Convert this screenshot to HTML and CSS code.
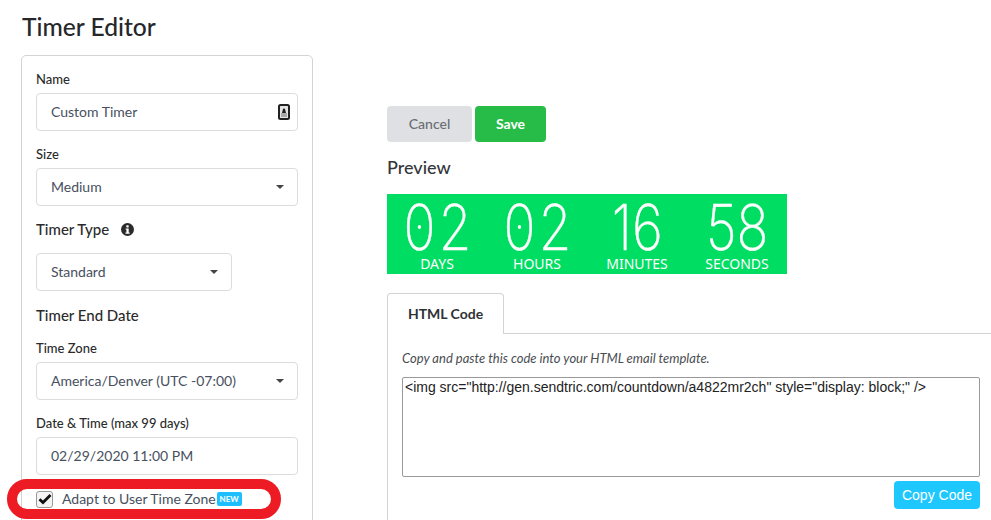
FILE: index.html
```html
<!DOCTYPE html>
<html lang="en">
<head>
<meta charset="utf-8">
<title>Timer Editor</title>
<link rel="stylesheet" href="styles.css">
</head>
<body>
<div class="page">
  <h1 class="title">Timer Editor</h1>
  <div class="columns">
    <section class="card">
      <div class="label">Name</div>
      <div class="control field-gap">
        <span>Custom Timer</span>
        <svg class="contact-icon" width="12" height="16" viewBox="0 0 12 16"><rect x="1" y="1" width="10" height="14" rx="1.5" fill="#e4e4e4" stroke="#222" stroke-width="2"/><rect x="3" y="9" width="6" height="4" fill="#aaa"/><path d="M6 4.5a1.2 1.2 0 0 1 1.2 1.2L8 9H4l.8-3.3A1.2 1.2 0 0 1 6 4.5z" fill="#222"/></svg>
      </div>
      <div class="label">Size</div>
      <div class="control field-gap"><span>Medium</span><i class="caret"></i></div>
      <div class="heading type-heading">Timer Type
        <svg class="info-icon" width="13" height="13" viewBox="0 0 13 13"><circle cx="6.5" cy="6.5" r="6.5" fill="#2b2b2b"/><rect x="5.3" y="2.2" width="2.4" height="2.2" rx=".6" fill="#fff"/><path d="M4.6 5.4h3.1v4.2h.9v1.2H4.5V9.6h.9V6.6h-.8z" fill="#fff"/></svg>
      </div>
      <div class="control control-short"><span>Standard</span><i class="caret"></i></div>
      <div class="heading end-heading">Timer End Date</div>
      <div class="label">Time Zone</div>
      <div class="control field-gap"><span>America/Denver (UTC -07:00)</span><i class="caret"></i></div>
      <div class="label">Date &amp; Time (max 99 days)</div>
      <div class="control"><span>02/29/2020 11:00 PM</span></div>
      <div class="check-row">
        <span class="checkbox"><svg width="14" height="12" viewBox="0 0 14 12"><path d="M1.5 6.2 5 9.6 12.5 2" fill="none" stroke="#111" stroke-width="2.8"/></svg></span>
        <span class="check-text">Adapt to User Time Zone</span>
        <span class="badge">NEW</span>
      </div>
    </section>
    <section class="main">
      <div class="actions">
        <button class="btn btn-cancel">Cancel</button>
        <button class="btn btn-save">Save</button>
      </div>
      <h2 class="preview-title">Preview</h2>
      <div class="timer">
        <div class="unit"><div class="digits"><span class="zero">0</span>2</div><div class="unit-label">DAYS</div></div>
        <div class="unit"><div class="digits"><span class="zero">0</span>2</div><div class="unit-label">HOURS</div></div>
        <div class="unit"><div class="digits">16</div><div class="unit-label">MINUTES</div></div>
        <div class="unit"><div class="digits">58</div><div class="unit-label">SECONDS</div></div>
      </div>
      <div class="tabs"><div class="tab">HTML Code</div></div>
      <div class="tab-body">
        <p class="help">Copy and paste this code into your HTML email template.</p>
        <div class="code">&lt;img src="http://gen.sendtric.com/countdown/a4822mr2ch" style="display: block;" /&gt;</div>
        <div class="copy-row"><button class="btn-copy">Copy Code</button></div>
      </div>
    </section>
  </div>
  <div class="highlight"></div>
</div>
</body>
</html>
```

FILE: styles.css
```css
* { box-sizing: border-box; }
html, body { margin: 0; height: 520px; overflow: hidden; background: #fff; }
body { font-family: "Lato", sans-serif; color: #2b2b2b; }
.page { position: relative; width: 991px; height: 520px; overflow: hidden; padding: 12px 0 0 21px; }
.title { margin: 0 0 12px 1px; font-size: 24.6px; line-height: 30px; font-weight: 500; color: #25272b; height: 31px; }
.columns { display: flex; align-items: flex-start; }
.card { width: 292px; height: 480px; flex: none; border: 1px solid #d3d3d3; border-radius: 5px; padding: 15px 14px 0; }
.label { font-size: 13px; line-height: 16px; font-weight: 500; margin-bottom: 6px; color: #2b2b2b; }
.heading { font-size: 15px; line-height: 18px; font-weight: 500; color: #2b2b2b; }
.control { display: flex; align-items: center; justify-content: space-between; height: 38px; border: 1px solid #dcdcdc; border-radius: 4px; padding: 0 14px 2px 14px; font-size: 14px; color: #47505e; }
.field-gap { margin-bottom: 15px; }
.control-short { width: 196px; }
.contact-icon { margin: 2px -7px 0 0; }
.caret { width: 0; height: 0; border-left: 4px solid transparent; border-right: 4px solid transparent; border-top: 4px solid #444; margin: 2px -1px 0 0; }
.type-heading { display: flex; align-items: center; gap: 12px; margin: -1px 0 15px; }
.info-icon { margin-top: 0; }
.end-heading { margin: 15px 0 16px; }
.check-row { display: flex; align-items: center; margin-top: 14px; height: 20px; }
.checkbox { display: flex; align-items: center; justify-content: center; width: 17px; height: 17px; border: 1px solid #999; border-radius: 3px; background: #f4f4f4; }
.check-text { margin: 0 0 2px 9px; font-size: 14px; color: #47505e; }
.badge { margin-left: 1px; width: 25px; height: 14px; border-radius: 2px; background: #1dbfff; color: #fff; font-size: 8px; font-weight: 700; line-height: 14px; text-align: center; }
.main { margin-left: 74px; flex: 1; min-width: 0; padding-top: 51px; margin-right: -1px; }
.actions { display: flex; gap: 3px; }
.btn { height: 36px; border: 0; border-radius: 4px; font-family: "Lato", sans-serif; font-size: 14px; padding: 0 0 2px; }
.btn-cancel { width: 85px; background: #dfe0e3; color: #6a6d72; font-weight: 500; }
.btn-save { width: 71px; background: #27bc48; color: #fff; font-weight: 700; }
.preview-title { margin: 14px 0 16px; font-size: 18px; line-height: 22px; font-weight: 500; color: #33363a; }
.timer { display: grid; grid-template-columns: repeat(4, 100px); width: 400px; height: 80px; background: #00dd63; color: #fff; text-align: center; }
.unit { display: flex; flex-direction: column; align-items: center; }
.digits { position: relative; display: flex; justify-content: center; font-family: "Inter", sans-serif; font-weight: 200; font-size: 63px; line-height: 58px; height: 58px; margin-top: 4px; transform: scaleX(.84); -webkit-text-stroke: .4px #fff; }
.zero { position: relative; margin-right: 4px; }
.zero::after { content: ""; position: absolute; left: 50%; top: 27px; width: 4px; height: 4px; margin-left: -2px; border-radius: 50%; background: #fff; }
.unit-label { font-family: "Noto Sans", sans-serif; font-size: 14px; line-height: 16px; margin-top: 0; }
.tabs { margin-top: 19px; height: 41px; border-bottom: 1px solid #d3d3d3; display: flex; }
.tab { width: 117px; height: 41px; border: 1px solid #d3d3d3; border-bottom: 0; border-radius: 4px 4px 0 0; background: #fff; font-size: 14px; font-weight: 700; line-height: 39px; text-align: center; color: #2f3236; }
.tab-body { border-left: 1px solid #d3d3d3; padding: 16px 12px 0 14px; height: 200px; }
.help { margin: 0 0 10px; font-size: 13px; line-height: 17px; font-style: italic; color: #4a4d52; }
.code { height: 100px; border: 1px solid #999; border-radius: 2px; padding: 2px; font-family: "Liberation Sans", sans-serif; font-size: 14px; line-height: 15px; color: #222; }
.copy-row { display: flex; justify-content: flex-end; margin-top: 4px; }
.btn-copy { width: 86px; height: 28px; border: 0; border-radius: 4px; padding: 0; background: #1ec8ff; color: #fff; font-family: "Liberation Sans", sans-serif; font-size: 14px; }
.highlight { position: absolute; left: 7px; top: 479px; width: 274px; height: 40px; border: 10px solid #ed1c24; border-radius: 20px; pointer-events: none; }
```
